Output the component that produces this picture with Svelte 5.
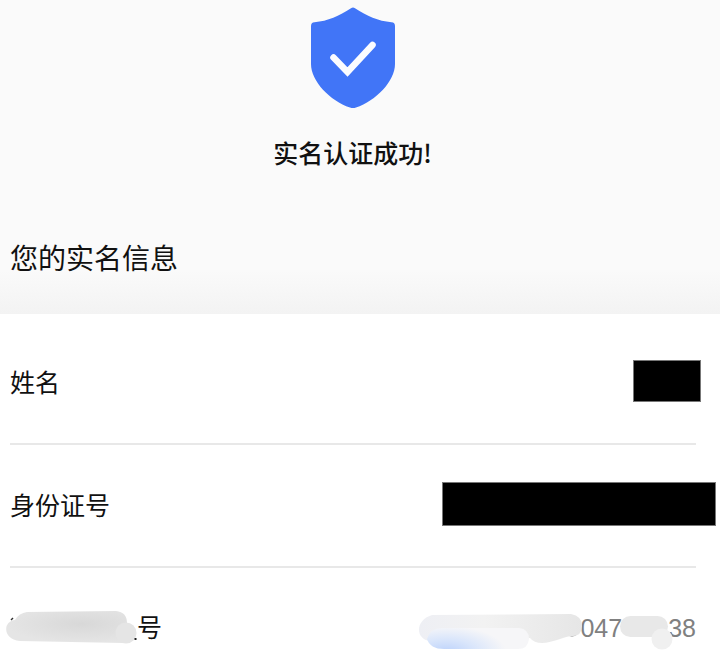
<script lang="ts">
  const title = '实名认证成功!';
  const sectionTitle = '您的实名信息';
</script>

<main class="page">
  <header class="result">
    <svg class="shield" width="84" height="102" viewBox="0 0 84 102" aria-hidden="true">
      <path
        d="M40 1.2Q42 0 44 1.2C56 9 67 14 80.500 15.200Q84 15.500 84 19V57C84 74 65 94 45 100.500Q42 101.500 39 100.500C19 94 0 74 0 57V19Q0 15.500 3.500 15.200C17 14 28 9 40 1.200Z"
        fill="#4175f7"
      />
      <path
        d="M22.500 50.500L36.500 65L61.500 38"
        fill="none"
        stroke="#fbfcff"
        stroke-width="6.500"
        stroke-linecap="round"
      />
    </svg>
    <h1 class="title">{title}</h1>
  </header>

  <h2 class="section-title">{sectionTitle}</h2>

  <dl class="info">
    <div class="row">
      <dt>姓名</dt>
      <dd><span class="mask mask-name"></span></dd>
    </div>

    <div class="row">
      <dt>身份证号</dt>
      <dd><span class="mask mask-id"></span></dd>
    </div>

    <div class="row">
      <dt class="smudged-label">
        <svg width="131" height="34" viewBox="0 0 131 34" aria-hidden="true">
          <defs>
            <radialGradient id="label-smudge" cx="0.6" cy="0.4" r="0.6">
              <stop offset="0" stop-color="#d8d8d8" />
              <stop offset="1" stop-color="#e5e5e5" />
            </radialGradient>
          </defs>
          <path d="M5 9L7 7" stroke="#333" stroke-width="1.5" />
          <path
            d="M21 1L110 0Q121 1 121 12A11 11 0 0 1 117 32L14 30C-4 28 -3 10 9 9Q13 2 21 1Z"
            fill="url(#label-smudge)"
          />
          <circle cx="120" cy="22" r="10.500" fill="#e5e5e5" />
          <path d="M128.500 28h2" stroke="#222" stroke-width="2" />
        </svg>
        <span>号</span>
      </dt>
      <dd class="phone">
        <span>047</span>
        <span>38</span>
        <svg class="phone-smudge" width="278" height="36" viewBox="0 0 278 36" aria-hidden="true">
          <defs>
            <linearGradient id="long-smudge">
              <stop offset="0" stop-color="#eeeff4" />
              <stop offset="0.4" stop-color="#f2f2f2" />
              <stop offset="1" stop-color="#e6e6e6" />
            </linearGradient>
            <radialGradient
              id="blue-smudge"
              gradientUnits="userSpaceOnUse"
              cx="0"
              cy="0"
              r="1"
              gradientTransform="translate(28 38) scale(60 26)"
            >
              <stop offset="0" stop-color="#bcd2fb" />
              <stop offset="0.5" stop-color="#dae6fb" />
              <stop offset="1" stop-color="#f6f6f8" />
            </radialGradient>
          </defs>
          <path
            d="M150 21Q154 24 158 21M210 21Q214 24 218 21M226 21Q230 24 234 21"
            fill="none"
            stroke="#bbb"
            stroke-width="1"
          />
          <path
            d="M14 1L153 0Q164 2 164 12Q164 22 154 22C144 23 134 29 124 29Q116 29 112 24L12 27C-3 25 -3 6 14 1Z"
            fill="url(#long-smudge)"
          />
          <path
            d="M9 25Q12 14 24 14H101Q111 15 111 25Q110 35 100 35H26Q12 35 9 25Z"
            fill="url(#blue-smudge)"
          />
          <rect x="202" y="2" width="48" height="21" rx="10.500" fill="#e8e8e8" />
          <circle cx="244" cy="25" r="10.500" fill="#f0f0f0" />
        </svg>
      </dd>
    </div>
  </dl>
</main>

<style>
  :global(body) {
    margin: 0;
    background: #fff;
  }

  .page {
    padding-top: 7px;
    background: #fafafa;
    color: #111;
    font-family: "Liberation Sans", "Noto Sans CJK SC", sans-serif;
  }

  .result {
    display: flex;
    flex-direction: column;
    align-items: center;
    gap: 25px;
    padding-right: 15px;
  }

  .shield {
    display: block;
  }

  .title {
    margin: 0;
    font-family: "Noto Sans CJK SC", sans-serif;
    font-size: 25px;
    font-weight: 500;
    line-height: 36px;
  }

  .section-title {
    margin: 0;
    padding: 70px 10px 34px;
    background: linear-gradient(transparent 70%, #f3f3f3);
    font-size: 28px;
    font-weight: 400;
    line-height: 40px;
  }

  .info {
    margin: 0;
    padding: 8px 24px 4px 10px;
    background: #fff;
  }

  .row {
    display: flex;
    align-items: center;
    justify-content: space-between;
    height: 121px;
    border-bottom: 2px solid #e8e8e8;
    font-size: 25px;
    line-height: 36px;
  }

  .row:last-child {
    height: 78px;
    border-bottom: none;
    align-items: flex-end;
  }

  dd {
    margin: 0;
  }

  .mask {
    display: block;
    margin-bottom: 4px;
    background: #000;
    border: 1px solid #777;
    box-sizing: border-box;
  }

  .mask-name {
    width: 68px;
    height: 42px;
    margin-right: -5px;
  }

  .mask-id {
    width: 274px;
    height: 44px;
    margin-right: -20px;
  }

  .smudged-label {
    display: flex;
    align-items: center;
    margin-left: -4px;
  }

  .phone {
    position: relative;
    display: flex;
    gap: 46px;
    color: #808080;
  }

  .phone-smudge {
    position: absolute;
    right: 0;
    bottom: -4px;
  }
</style>
